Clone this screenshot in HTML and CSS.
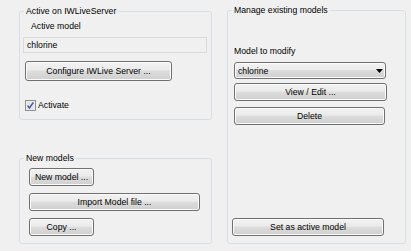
FILE: index.html
```html
<!DOCTYPE html>
<html>
<head>
<meta charset="utf-8">
<link rel="stylesheet" href="styles.css">
</head>
<body>
<div class="window">
  <div class="col-left">
    <fieldset class="group group-active">
      <legend>Active on IWLiveServer</legend>
      <div class="inner inner-active">
        <div class="label label-active">Active model</div>
        <div class="textfield">chlorine</div>
        <button class="btn btn-configure">Configure IWLive Server ...</button>
        <label class="check">
          <span class="box">
            <svg width="11" height="11" viewBox="0 0 11 11">
              <rect x="0.5" y="0.5" width="10" height="10" fill="#f4f4f4" stroke="#8e8f8f"/>
              <rect x="1.5" y="1.5" width="8" height="8" fill="#e2e4e8"/>
              <path d="M2.6 5.6 L4.4 7.9 L8.4 2.4" fill="none" stroke="#3e5a98" stroke-width="1.5"/>
            </svg>
          </span>
          <span>Activate</span>
        </label>
      </div>
    </fieldset>
    <fieldset class="group group-new">
      <legend>New models</legend>
      <div class="inner inner-new">
        <button class="btn btn-small">New model ...</button>
        <button class="btn btn-wide">Import Model file ...</button>
        <button class="btn btn-small">Copy ...</button>
      </div>
    </fieldset>
  </div>
  <fieldset class="group group-manage">
    <legend>Manage existing models</legend>
    <div class="inner inner-manage">
      <div class="label label-modify">Model to modify</div>
      <div class="combo">
        <span>chlorine</span>
        <svg width="7" height="4" viewBox="0 0 7 4"><path d="M0 0 H7 L3.5 4 Z" fill="#000"/></svg>
      </div>
      <button class="btn btn-right btn-view">View / Edit ...</button>
      <button class="btn btn-right btn-delete">Delete</button>
      <button class="btn btn-right btn-set">Set as active model</button>
    </div>
  </fieldset>
</div>
</body>
</html>
```
FILE: styles.css
```css
* { box-sizing: border-box; }
html, body {
  margin: 0;
  padding: 0;
  background: #f0f0f0;
  width: 411px;
  height: 251px;
  overflow: hidden;
}
body {
  font-family: "Liberation Sans", Arial, sans-serif;
  font-size: 8.7px;
  color: #000;
}
.window {
  display: flex;
  padding: 4px 0 0 19px;
  gap: 15px;
}
.col-left {
  display: flex;
  flex-direction: column;
  width: 193px;
  gap: 32px;
  padding-top: 1px;
}
.group {
  margin: 0;
  padding: 0;
  border: 1px solid #d5dfe5;
  border-radius: 3px;
  min-width: 0;
}
.group legend {
  padding: 0 2px;
  margin-left: 4px;
  line-height: 12px;
  height: 12px;
}
.group-active { height: 115px; }
.group-new { height: 92px; }
.group-manage {
  width: 179px;
  height: 240px;
  display: flex;
  flex-direction: column;
}
.group-manage legend { margin-left: 4px; }
.inner { display: flex; flex-direction: column; align-items: flex-start; }
.inner-active { padding: 3px 4px 0 3px; }
.label { line-height: 12px; }
.label-active { margin-left: 8px; }
.textfield {
  align-self: stretch;
  margin-top: 5px;
  height: 16px;
  border: 1px solid #dadada;
  background: #f0f0f0;
  padding: 0 0 0 3px;
  line-height: 14px;
}
.btn {
  font-family: inherit;
  font-size: 8.7px;
  color: #000;
  margin: 0;
  padding: 0;
  border: 1px solid #707070;
  border-radius: 3px;
  background: linear-gradient(#f2f2f2 0%, #ebebeb 45%, #dddddd 50%, #cfcfcf 100%);
  box-shadow: inset 0 0 0 1px #fbfbfb;
  height: 18px;
  line-height: 16px;
  text-align: center;
}
.btn-configure {
  margin-left: 2px;
  margin-top: 8px;
  width: 147px;
  height: 20px;
}
.check {
  display: flex;
  align-items: center;
  gap: 2px;
  margin-left: 2px;
  margin-top: 18px;
  height: 12px;
}
.box { display: block; width: 11px; height: 11px; }
.box svg { display: block; }
.inner-new { padding: 4px 0 0 9px; gap: 7px; }
.btn-small { width: 65px; }
.btn-wide { width: 171px; }
.inner-manage {
  flex: 1;
  padding: 0 0 7px 6px;
}
.label-modify { margin-top: 29px; }
.combo {
  margin-top: 5px;
  width: 152px;
  height: 17px;
  border: 1px solid #707070;
  border-radius: 3px;
  background: linear-gradient(#f2f2f2 0%, #ebebeb 45%, #dddddd 50%, #cfcfcf 100%);
  box-shadow: inset 0 0 0 1px #fbfbfb;
  display: flex;
  align-items: center;
  justify-content: space-between;
  padding: 0 2px 0 3px;
}
.combo svg { display: block; }
.btn-right { width: 153px; }
.btn-view { margin-top: 4px; }
.btn-delete { margin-top: 6px; width: 151px; }
.btn-set { margin-top: auto; margin-left: -2px; width: 152px; }
```
